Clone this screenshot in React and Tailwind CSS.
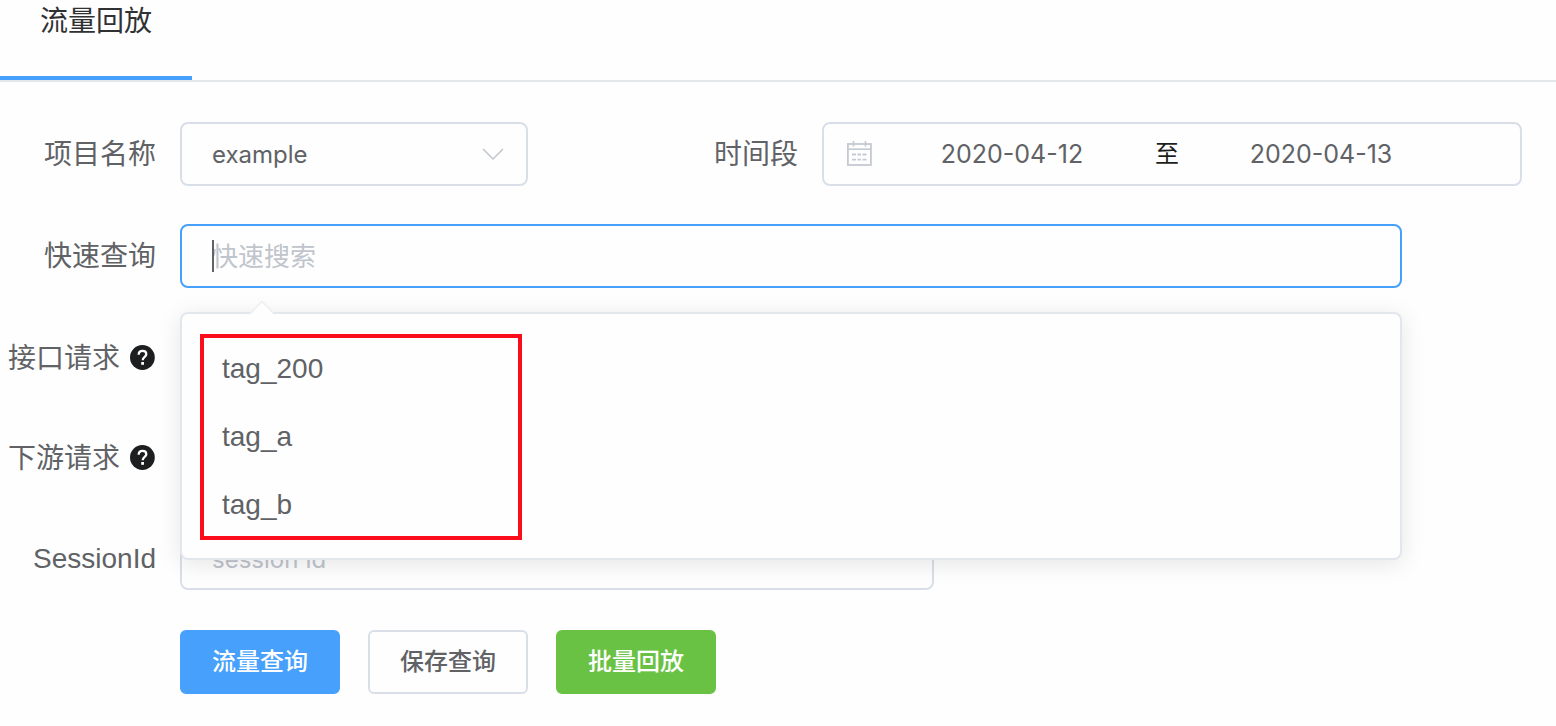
import React from "react";

const TAGS = ["tag_200", "tag_a", "tag_b"];

const FIELD =
  "h-16 rounded-lg border-2 border-[#d9dfe8] bg-[#fefefe] text-[#606266] outline-none";
const BUTTON =
  "h-16 w-40 rounded-md border-2 text-2xl font-medium";

function CalendarIcon() {
  return (
    <svg className="h-7 w-7 shrink-0" viewBox="0 0 28 28" fill="none" stroke="#c4cad1" aria-hidden="true">
      <rect x="2.900" y="4" width="23" height="21" strokeWidth="1.800" />
      <path d="M2 9.200H26.500" strokeWidth="1.600" />
      <path d="M8.500 1V6.500M20.500 1V6.500" strokeWidth="1.600" />
      <path d="M7 14.500H11M12.500 14.500H16M17.500 14.500H21.500M7 19.700H11M12.500 19.700H16M17.500 19.700H21.500" strokeWidth="1.800" />
    </svg>
  );
}

function QuestionIcon() {
  return (
    <svg className="h-[26px] w-[26px] shrink-0" viewBox="0 0 26 26" fill="none" aria-hidden="true">
      <circle cx="12.400" cy="12.500" r="12.400" fill="#1d1e20" />
      <path
        d="M8.700 9.700C8.700 7.300 10.200 5.900 12.500 5.900C14.700 5.900 16.300 7.200 16.300 9.200C16.300 11.700 12.700 12 12.700 15.200"
        stroke="#fefefe"
        strokeWidth="2.300"
      />
      <rect x="11.200" y="17" width="2.800" height="2.800" fill="#fefefe" />
    </svg>
  );
}

function Label({ htmlFor, help, children }) {
  return (
    <label
      htmlFor={htmlFor}
      className="flex w-[156px] shrink-0 items-center justify-end gap-2.5 whitespace-nowrap text-[28px] leading-10 text-[#606266]"
    >
      <span className="pt-0.5">{children}</span>
      {help && <QuestionIcon />}
    </label>
  );
}

function TagPopover() {
  return (
    <div className="absolute top-full right-0 left-0 z-10 mt-6 rounded-lg border-2 border-[#e2e7ee] bg-[#fefefe] py-5 shadow-[0_4px_24px_rgba(0,0,0,0.1)]">
      <svg className="absolute -top-3.5 left-16 h-4 w-8" viewBox="0 0 32 16" aria-hidden="true">
        <path d="M3 16L16 2L29 16Z" fill="#fefefe" />
        <path d="M3 14.500L16 1.500L29 14.500" fill="none" stroke="#eceef2" strokeWidth="1.500" />
      </svg>
      <ul className="text-[28px] leading-[66px] text-[#606266]">
        {TAGS.map((tag) => (
          <li key={tag} className="px-10 pt-0.5">
            {tag}
          </li>
        ))}
      </ul>
      <div className="pointer-events-none absolute top-5 bottom-[18px] left-[18px] w-[322px] border-4 border-[#fc0d1b]" />
    </div>
  );
}

export default function App() {
  return (
    <main className="min-h-screen bg-[#fefefe] font-['Inter','Noto_Sans_CJK_SC',sans-serif]">
      <nav className="flex border-b-2 border-[#e4e7ea]">
        <button
          type="button"
          className="border-b-4 border-[#46a0fc] px-10 pb-[34px] text-[28px] leading-[42px] text-[#303133]"
        >
          流量回放
        </button>
      </nav>

      <form
        className="flex flex-col gap-9 pt-10 pr-[34px] font-['Liberation_Sans','Noto_Sans_CJK_SC',sans-serif]"
        onSubmit={(e) => e.preventDefault()}
      >
        <div className="flex flex-col gap-[38px]">
          <div className="flex items-center justify-between">
            <div className="flex items-center gap-6">
              <Label htmlFor="project">项目名称</Label>
              <div className="relative">
                <select
                  id="project"
                  defaultValue="example"
                  className={`${FIELD} w-[348px] appearance-none px-[30px] pt-0.5 text-2xl font-['Inter','Noto_Sans_CJK_SC',sans-serif]`}
                >
                  <option>example</option>
                </select>
                <svg
                  className="pointer-events-none absolute top-6 right-6 h-4 w-6"
                  viewBox="0 0 24 16"
                  fill="none"
                  stroke="#c0c4cc"
                  strokeWidth="1.500"
                  aria-hidden="true"
                >
                  <path d="M3 3L13 13L23 3" />
                </svg>
              </div>
            </div>
            <div className="flex items-center gap-6">
              <Label htmlFor="start">时间段</Label>
              <div className={`${FIELD} flex w-[700px] items-center pl-[21px] text-[25px] font-['Inter','Noto_Sans_CJK_SC',sans-serif]`}>
                <CalendarIcon />
                <input
                  id="start"
                  type="text"
                  defaultValue="2020-04-12"
                  className="w-[278px] bg-transparent pt-0.5 text-center outline-none"
                />
                <span className="w-8 text-center text-2xl text-[#1d1e20]">至</span>
                <input
                  type="text"
                  aria-label="时间段"
                  defaultValue="2020-04-13"
                  className="w-[276px] bg-transparent pt-0.5 text-center outline-none"
                />
              </div>
            </div>
          </div>

          <div className="flex items-center gap-6 pr-[120px]">
            <Label htmlFor="quick">快速查询</Label>
            <div className="relative flex-1">
              <input
                id="quick"
                type="text"
                placeholder="快速搜索"
                className="block h-16 w-full rounded-lg border-2 border-[#46a0fc] bg-[#fefefe] px-[30px] pt-0.5 text-[26px] text-[#606266] outline-none placeholder:text-[#c0c4cc]"
              />
              <span className="pointer-events-none absolute top-4 left-8 h-8 w-0.5 bg-[#606266]" />
              <TagPopover />
            </div>
          </div>

          <div className="flex items-center gap-6 pr-[120px]">
            <Label htmlFor="inbound" help>接口请求</Label>
            <input id="inbound" type="text" className={`${FIELD} w-[754px] px-[30px]`} />
          </div>
        </div>

        <div className="flex items-center gap-6 pr-[120px]">
          <Label htmlFor="outbound" help>下游请求</Label>
          <input id="outbound" type="text" className={`${FIELD} w-[754px] px-[30px]`} />
        </div>

        <div className="flex items-center gap-6">
          <Label htmlFor="session">SessionId</Label>
          <input
            id="session"
            type="text"
            placeholder="session Id"
            className={`${FIELD} w-[754px] px-[30px] pt-0.5 text-2xl font-['Inter','Noto_Sans_CJK_SC',sans-serif] placeholder:text-[#c0c4cc]`}
          />
        </div>

        <div className="flex gap-7 pt-1 pl-[180px]">
          <button type="submit" className={`${BUTTON} border-[#46a0fc] bg-[#46a0fc] text-white`}>
            流量查询
          </button>
          <button type="button" className={`${BUTTON} border-[#d9dfe8] bg-[#fefefe] text-[#606266]`}>
            保存查询
          </button>
          <button type="button" className={`${BUTTON} border-[#69c244] bg-[#69c244] text-white`}>
            批量回放
          </button>
        </div>
      </form>
    </main>
  );
}
